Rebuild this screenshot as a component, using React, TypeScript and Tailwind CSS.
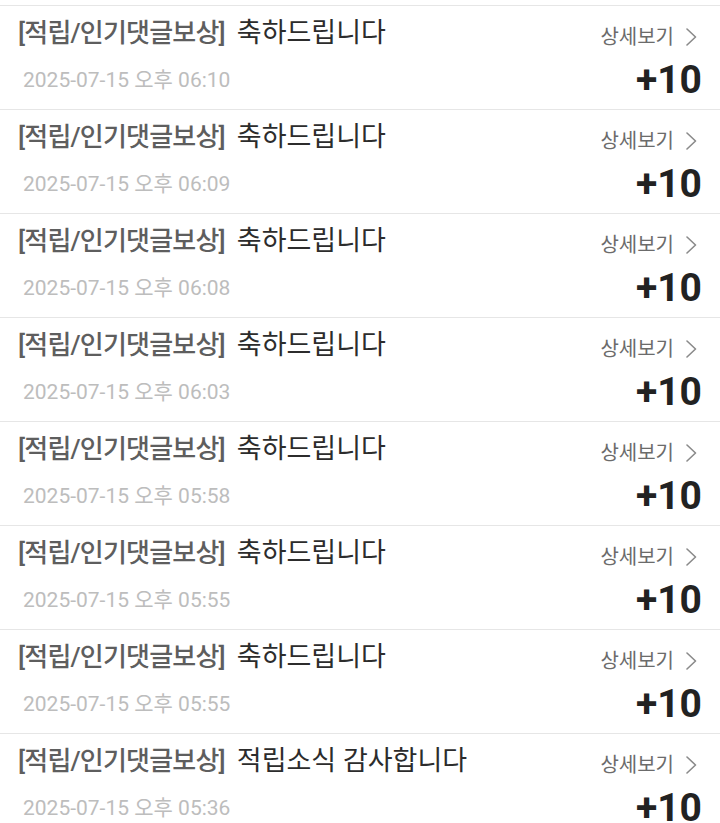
import React from "react";

const rows = [
  { msg: "축하드립니다", time: "06:10" },
  { msg: "축하드립니다", time: "06:09" },
  { msg: "축하드립니다", time: "06:08" },
  { msg: "축하드립니다", time: "06:03" },
  { msg: "축하드립니다", time: "05:58" },
  { msg: "축하드립니다", time: "05:55" },
  { msg: "축하드립니다", time: "05:55" },
  { msg: "적립소식 감사합니다", time: "05:36" },
];

function Chevron() {
  return (
    <svg width="14" height="18" viewBox="0 0 14 18" fill="none" className="ml-[10px]">
      <path d="M3 1 L11.5 9 L3 17" stroke="#8a8a8a" strokeWidth="1.6" strokeLinecap="round" strokeLinejoin="round" />
    </svg>
  );
}

export default function App() {
  return (
    <div
      className="w-[720px] h-[823px] overflow-hidden bg-white pt-[5px]"
      style={{ fontFamily: "Roboto, 'Noto Sans CJK KR', sans-serif" }}
    >
      {rows.map((r, i) => (
        <div key={i} className="flex h-[104px] border-t border-[#e6e6e6] pl-[18px] pr-[22px]">
          <div className="flex flex-1 flex-col">
            <div className="mt-[11px] flex items-baseline leading-[32px] whitespace-nowrap">
              <span className="text-[26px] font-medium tracking-[-0.8px] text-[#5e5e5e]">[적립/인기댓글보상]</span>
              <span className="ml-[12px] text-[27px] text-[#2c2c2c]">{r.msg}</span>
            </div>
            <div className="mt-[19px] pl-[5px] text-[21px] leading-[24px] text-[#bdbdbd] whitespace-nowrap">
              2025-07-15 오후 {r.time}
            </div>
          </div>
          <div className="flex flex-col items-end">
            <div className="mt-[18px] flex items-center text-[20px] leading-[26px] text-[#6b6b6b]">
              상세보기
              <Chevron />
            </div>
            <div className="mt-[9px] mr-[-4px] text-[39px] leading-[42px] font-bold text-[#222222]">+10</div>
          </div>
        </div>
      ))}
    </div>
  );
}
